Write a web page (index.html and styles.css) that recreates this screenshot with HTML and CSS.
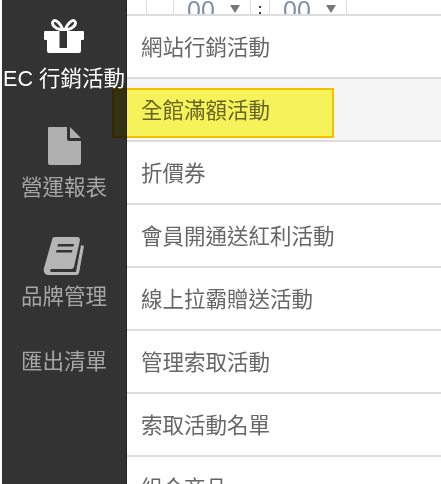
FILE: index.html
```html
<!DOCTYPE html>
<html lang="zh-Hant">
<head>
<meta charset="utf-8">
<title>EC 行銷活動</title>
<link rel="stylesheet" href="styles.css">
</head>
<body>
<div class="app">
  <nav class="side">
    <a class="side-item active">
      <svg class="ico gift" viewBox="0 0 40 34"><path fill="none" stroke="currentColor" stroke-width="2.800" d="M19 11C16 3 11 0 9 2.500c-2 3 3 8.500 11 8.500s13-5.500 11-8.500C29 0 24 3 21 11"/><path fill="currentColor" d="M1 12h38a1 1 0 0 1 1 1v7a1 1 0 0 1-1 1h-2v11a2 2 0 0 1-2 2H5a2 2 0 0 1-2-2V21H1a1 1 0 0 1-1-1v-7a1 1 0 0 1 1-1z"/><rect class="gift-gap" x="15.500" y="12" width="7.500" height="17"/></svg>
      <span>EC 行銷活動</span>
    </a>
    <a class="side-item report">
      <svg class="ico doc" viewBox="0 0 33 38"><path fill="currentColor" d="M1 0h18v12a2 2 0 0 0 2 2h12v22a2 2 0 0 1-2 2H2a2 2 0 0 1-2-2V1a1 1 0 0 1 1-1z"/><path fill="currentColor" d="M22 0l11 11H22z"/></svg>
      <span>營運報表</span>
    </a>
    <a class="side-item brand">
      <svg class="ico book" viewBox="0 0 42 38"><path fill="currentColor" d="M12 0h22a3 3 0 0 1 3 3l-6 27a3 3 0 0 1-3 2H8a2 2 0 0 0 0 3h25l5-27 3 1-5 27a3 3 0 0 1-3 2H6c-4 0-6-3-5-7L9 3a3 3 0 0 1 3-3z"/><path class="book-line" d="M15 7h16l-.6 2.600h-16zM13.500 13h16l-.6 2.600h-16z"/></svg>
      <span>品牌管理</span>
    </a>
    <a class="side-item plain"><span>匯出清單</span></a>
  </nav>
  <main class="main">
    <div class="filter">
      <i class="cell c1"></i><i class="cell c2"></i>
      <div class="cell time"><span>00</span><b class="caret"></b></div>
      <div class="cell colon">:</div>
      <div class="cell time"><span>00</span><b class="caret"></b></div>
    </div>
    <ul class="menu">
      <li>網站行銷活動</li>
      <li class="current">全館滿額活動</li>
      <li>折價券</li>
      <li>會員開通送紅利活動</li>
      <li>線上拉霸贈送活動</li>
      <li>管理索取活動</li>
      <li>索取活動名單</li>
      <li>組合商品</li>
    </ul>
  </main>
</div>
<div class="marker"></div>
</body>
</html>
```
FILE: styles.css
```css
* { box-sizing: border-box; }
html, body { margin: 0; height: 100%; overflow: hidden; background: #fff; }
body { font-family: "Liberation Sans", "Noto Sans CJK TC", sans-serif; position: relative; }
.app { display: flex; height: 484px; padding-left: 2px; overflow: hidden; }
.side { width: 125px; flex: none; background: #333; color: #a6a6a6; border-right: 1px solid #222; display: flex; flex-direction: column; align-items: center; font-size: 21.500px; line-height: 24px; white-space: nowrap; }
.side-item { display: flex; flex-direction: column; align-items: center; width: 100%; }
.side-item.active { color: #fff; padding-top: 19px; gap: 14px; }
.ico { display: block; }
.gift { width: 40px; height: 34px; }
.gift-gap { fill: #333; }
.doc { width: 33px; height: 38px; color: #b0b0b0; }
.report { padding-top: 36px; gap: 11px; }
.book { width: 42px; height: 38px; color: #b5b5b5; }
.book-line { fill: #333; }
.brand { padding-top: 37px; gap: 10px; }
.plain { padding-top: 41px; }
.main { flex: 1; min-width: 0; }
.filter { height: 16px; display: flex; border-bottom: 2px solid #ddd; color: #7f90a5; overflow: hidden; font-size: 25px; }
.cell { border-right: 1px solid #ddd; height: 14px; flex: none; overflow: hidden; }
.c1 { width: 20px; }
.c2 { width: 27px; }
.time { width: 77px; display: flex; justify-content: space-between; padding: 5px 10px 0 13px; }
.time span { display: block; height: 9px; line-height: 24px; margin-top: -7px; }
.caret { width: 0; height: 0; border: 5px solid transparent; border-top: 8px solid #777; border-bottom: 0; }
.colon { width: 19px; text-align: center; color: #333; font-size: 14px; line-height: 12px; padding-top: 3px; font-weight: bold; }
.menu { list-style: none; margin: 0; padding: 0; }
.menu li { height: 63px; padding-left: 14px; border-bottom: 2px solid #ddd; color: #666; font-size: 21.500px; line-height: 64px; white-space: nowrap; }
.menu .current { background: #f5f5f5; }
.marker { position: absolute; left: 112px; top: 88px; width: 222px; height: 50px; border: 2px solid #ffc800; background: #fffd5c; mix-blend-mode: multiply; }
```
